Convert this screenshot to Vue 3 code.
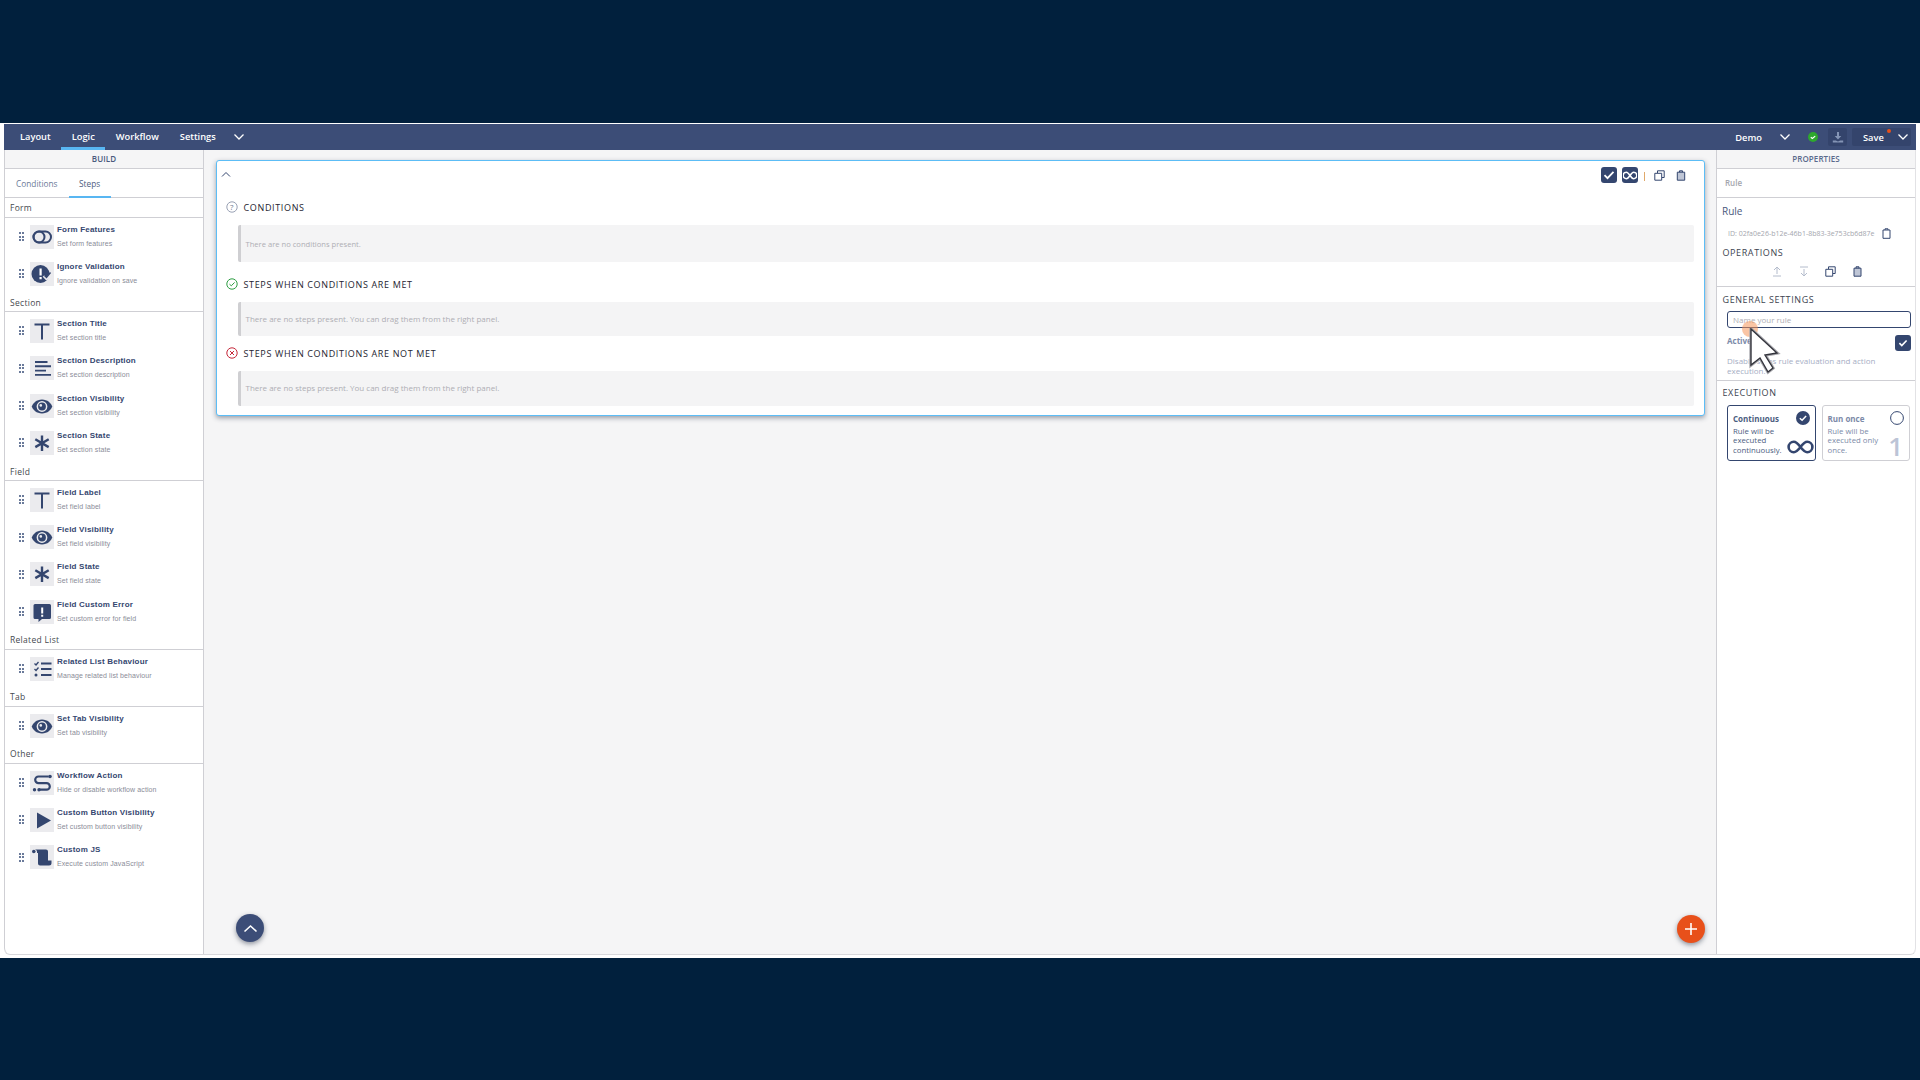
<script setup>
const NAVY = '#34466f'
const W = '#ebebee'
const f = (d, fill = NAVY) => ({ d, fill, stroke: 'none', sw: 0 })
const s = (d, sw = 2.2, stroke = NAVY) => ({ d, fill: 'none', stroke, sw })
const circle = (cx, cy, r) => `M${cx - r} ${cy}a${r} ${r} 0 1 0 ${2 * r} 0a${r} ${r} 0 1 0 ${-2 * r} 0z`
const eye = [
  f('M12 5.5C6.5 5.5 2.8 9.3 1.8 12.5c1 3.2 4.7 7 10.2 7s9.2-3.8 10.2-7C21.2 9.3 17.5 5.5 12 5.5z'),
  f(circle(12, 12.5, 5.4), W),
  f(circle(12, 12.5, 3.9)),
  f(circle(10.8, 11.4, 1.3), W)
]
const star = [s('M12 4.5v15.5M5.3 8.3l13.4 7.8M18.7 8.3L5.3 16.1', 2.4)]
const tee = [s('M4.5 5.5h15M12 5.5v15', 2)]
const icons = {
  toggle: [s('M9 6.5h6.5a5.5 5.5 0 0 1 0 11H9a5.5 5.5 0 0 1 0-11z', 2), s(circle(9, 12, 5.5), 2)],
  ignore: [f(circle(10.5, 12, 9)), f('M9.5 6.5h2.2v7H9.5zM9.5 15h2.2v2.2H9.5z', '#fff'), s('M13.5 14l3 3 5-6', 2.4, W), s('M14.5 13.5l2 2 4-5', 1.4, NAVY)],
  title: tee,
  align: [s('M5 6h12.5M5 10.3h16M5 14.6h11M5 18.9h16', 1.9)],
  eye,
  star,
  error: [f('M5 4h14.5A1.5 1.5 0 0 1 21 5.5v12a1.5 1.5 0 0 1-1.5 1.5H12l-3.5 3v-3H5a1.5 1.5 0 0 1-1.5-1.5v-12A1.5 1.5 0 0 1 5 4z'), f('M11.2 7.5h2v6h-2zM11.2 14.8h2v2h-2z', '#fff')],
  list: [s('M4.5 6.5l1.5 1.5 2.5-3M4.5 12l1.5 1.5 2.5-3', 1.3), f(circle(6, 18, 1.5)), s('M11 6.5h10.5M11 12h10.5M11 18h10.5', 2)],
  flow: [s('M18.5 5.5H8.5a3.3 3.3 0 0 0 0 6.6h8a3.3 3.3 0 0 1 0 6.6H9', 2.2), f(circle(20, 5.5, 1.8)), f(circle(4.5, 18.7, 1.7)), f(circle(9, 18.7, 1.7))],
  play: [f('M7 4.5l14 8-14 8z')],
  script: [f('M3.5 4.5h12.5a2 2 0 0 1 2 2v9h3.5v2.5a2.5 2.5 0 0 1-2.5 2.5H10a2 2 0 0 1-2-2v-10.5h-1V7a2.5 2.5 0 0 0-2.5-2.5h-1z'), f(circle(3.8, 6.5, 1.8))]
}
const groups = [
  { name: 'Form', items: [
    ['toggle', 'Form Features', 'Set form features'],
    ['ignore', 'Ignore Validation', 'Ignore validation on save']] },
  { name: 'Section', items: [
    ['title', 'Section Title', 'Set section title'],
    ['align', 'Section Description', 'Set section description'],
    ['eye', 'Section Visibility', 'Set section visibility'],
    ['star', 'Section State', 'Set section state']] },
  { name: 'Field', items: [
    ['title', 'Field Label', 'Set field label'],
    ['eye', 'Field Visibility', 'Set field visibility'],
    ['star', 'Field State', 'Set field state'],
    ['error', 'Field Custom Error', 'Set custom error for field']] },
  { name: 'Related List', items: [['list', 'Related List Behaviour', 'Manage related list behaviour']] },
  { name: 'Tab', items: [['eye', 'Set Tab Visibility', 'Set tab visibility']] },
  { name: 'Other', items: [
    ['flow', 'Workflow Action', 'Hide or disable workflow action'],
    ['play', 'Custom Button Visibility', 'Set custom button visibility'],
    ['script', 'Custom JS', 'Execute custom JavaScript']] }
]
const blocks = [
  { title: 'Conditions', kind: 'q', text: 'There are no conditions present.', cls: 'b1' },
  { title: 'Steps when conditions are met', kind: 'ok', text: 'There are no steps present. You can drag them from the right panel.', cls: 'b2' },
  { title: 'Steps when conditions are not met', kind: 'no', text: 'There are no steps present. You can drag them from the right panel.', cls: 'b3' }
]
</script>

<template>
  <div class="page">
    <div class="app">
      <header class="nav">
        <a class="nt">Layout</a>
        <a class="nt current">Logic</a>
        <a class="nt">Workflow</a>
        <a class="nt">Settings</a>
        <svg class="chev" width="12" height="8" viewBox="0 0 12 8"><path d="M1.5 1.5L6 6l4.500-4.500" fill="none" stroke="#fff" stroke-width="1.3"/></svg>
        <span class="grow"></span>
        <span class="demo">Demo</span>
        <svg class="chev demo-chev" width="12" height="8" viewBox="0 0 12 8"><path d="M1.5 1.5L6 6l4.500-4.500" fill="none" stroke="#fff" stroke-width="1.3"/></svg>
        <svg class="ok" width="10" height="10" viewBox="0 0 10 10"><circle cx="5" cy="5" r="5" fill="#2ea82e"/><path d="M2.800 5.200l1.600 1.300 2.800-2.400" fill="none" stroke="#fff" stroke-width="1.2"/></svg>
        <span class="dl">
          <svg width="12" height="12" viewBox="0 0 12 12"><path d="M5 1h2v4h2.300L6 8.500 2.700 5H5zM.8 9.500h3l2.200 1 2.200-1h3V11.500H.8z" fill="#8494b5"/></svg>
        </span>
        <span class="save">
          <span>Save</span>
          <i class="dot"></i>
          <svg width="12" height="8" viewBox="0 0 12 8"><path d="M1.5 1.5L6 6l4.500-4.500" fill="none" stroke="#fff" stroke-width="1.3"/></svg>
        </span>
      </header>
      <div class="body">
        <aside class="left">
          <div class="phead">BUILD</div>
          <div class="tabs">
            <span class="tab">Conditions</span>
            <span class="tab on">Steps</span>
          </div>
          <section v-for="g in groups" :key="g.name">
            <div class="glabel">{{ g.name }}</div>
            <div class="gitems">
              <div v-for="it in g.items" :key="it[1]" class="item">
                <span class="grip"><i v-for="n in 6" :key="n"></i></span>
                <span class="ibox">
                  <svg width="24" height="24" viewBox="0 0 24 24">
                    <path v-for="(p, i) in icons[it[0]]" :key="i" :d="p.d" :fill="p.fill" :stroke="p.stroke" :stroke-width="p.sw"/>
                  </svg>
                </span>
                <span class="itxt">
                  <b>{{ it[1] }}</b>
                  <small>{{ it[2] }}</small>
                </span>
              </div>
            </div>
          </section>
        </aside>
        <main class="center">
          <div class="card">
            <div class="ctop">
              <svg class="up-chev" width="10" height="7" viewBox="0 0 10 7"><path d="M1 5.500l4-4 4 4" fill="none" stroke="#34466f" stroke-width="1"/></svg>
              <span class="grow"></span>
              <span class="sq"><svg width="12" height="10" viewBox="0 0 12 10"><path d="M1.5 5.200l3 3L10.500 1.800" fill="none" stroke="#fff" stroke-width="1.8"/></svg></span>
              <span class="sq"><svg width="14" height="9" viewBox="0 0 14 9"><path d="M7 4.500C5.500 2.300 4.500 1.300 3.400 1.300a3.200 3.200 0 0 0 0 6.400C4.500 7.700 5.500 6.700 7 4.500s2.500-3.200 3.600-3.200a3.200 3.200 0 0 1 0 6.400C9.500 7.700 8.500 6.700 7 4.500z" fill="none" stroke="#fff" stroke-width="1.5"/></svg></span>
              <span class="vsep"></span>
              <svg class="tool" width="11" height="11" viewBox="0 0 11 11"><path d="M3.500 3V.8h6.700v6.700H8M.8 3.300h6.900v6.900H.8z" fill="none" stroke="#34466f" stroke-width="1"/></svg>
              <svg class="tool tr" width="10" height="11" viewBox="0 0 10 11"><path d="M1.300 2.200h7.400v8H1.300zM3.500 2.200V.8h3v1.400" fill="#bfc6d6" stroke="#34466f" stroke-width="1"/></svg>
            </div>
            <template v-for="b in blocks" :key="b.title">
              <div class="bh" :class="b.cls">
                <svg width="12" height="12" viewBox="0 0 12 12">
                  <template v-if="b.kind === 'q'">
                    <circle cx="6" cy="6" r="5.2" fill="none" stroke="#8d96ab" stroke-width=".9"/>
                    <text x="6" y="8.5" text-anchor="middle" class="qm">?</text>
                  </template>
                  <template v-else-if="b.kind === 'ok'">
                    <circle cx="6" cy="6" r="5.2" fill="none" stroke="#2f9e44" stroke-width="1"/>
                    <path d="M3.500 6.200l1.800 1.600L8.600 4.400" fill="none" stroke="#2f9e44" stroke-width="1"/>
                  </template>
                  <template v-else>
                    <circle cx="6" cy="6" r="5.2" fill="none" stroke="#c6283a" stroke-width="1"/>
                    <path d="M4 4l4 4M8 4l-4 4" stroke="#c6283a" stroke-width="1"/>
                  </template>
                </svg>
                <span>{{ b.title }}</span>
              </div>
              <div class="empty" :class="b.cls">{{ b.text }}</div>
            </template>
          </div>
          <button class="fab up"><svg width="15" height="9" viewBox="0 0 15 9"><path d="M1.500 7.500L7.500 2l6 5.500" fill="none" stroke="#fff" stroke-width="1.6"/></svg></button>
          <button class="fab add"><svg width="14" height="14" viewBox="0 0 14 14"><path d="M7 1v12M1 7h12" stroke="#fff" stroke-width="1.6"/></svg></button>
        </main>
        <aside class="right">
          <div class="phead props">PROPERTIES</div>
          <div class="rbar">Rule</div>
          <div class="rsec first">
            <div class="rtitle">Rule</div>
            <div class="idrow">
              <span>ID: 02fa0e26-b12e-46b1-8b83-3e753cb6d87e</span>
              <svg width="9" height="11" viewBox="0 0 9 11"><path d="M1 2h7v8.300H1zM3 2V.8h3V2" fill="none" stroke="#34466f" stroke-width="1"/></svg>
            </div>
            <div class="cap">OPERATIONS</div>
            <div class="ops">
              <svg width="10" height="11" viewBox="0 0 10 11"><path d="M5 8V1.500M2 4l3-3 3 3M1 10h8" fill="none" stroke="#b4bccc" stroke-width="1"/></svg>
              <svg width="10" height="11" viewBox="0 0 10 11"><path d="M5 3v6.500M2 7l3 3 3-3M1 1h8" fill="none" stroke="#b4bccc" stroke-width="1"/></svg>
              <svg width="11" height="11" viewBox="0 0 11 11"><path d="M3.500 3V.8h6.700v6.700H8M.8 3.300h6.900v6.900H.8z" fill="none" stroke="#34466f" stroke-width="1"/></svg>
              <svg width="9" height="11" viewBox="0 0 9 11"><path d="M1 2.200h7v8H1zM3 2.200V.8h3v1.400" fill="#bfc6d6" stroke="#34466f" stroke-width="1"/></svg>
            </div>
          </div>
          <div class="rsec second">
            <div class="cap">GENERAL SETTINGS</div>
            <input class="name" placeholder="Name your rule" />
            <div class="activerow">
              <span>Active</span>
              <span class="sq big"><svg width="10" height="8" viewBox="0 0 12 10"><path d="M1.500 5.200l3 3L10.500 1.800" fill="none" stroke="#fff" stroke-width="2"/></svg></span>
            </div>
            <p class="help">Disable steps rule evaluation and action execution.</p>
          </div>
          <div class="rsec third">
            <div class="cap">EXECUTION</div>
            <div class="modes">
              <div class="mode sel">
                <b>Continuous</b>
                <p>Rule will be<br>executed<br>continuously.</p>
                <svg class="mtick" width="14" height="14" viewBox="0 0 14 14"><circle cx="7" cy="7" r="7" fill="#34466f"/><path d="M3.800 7.200l2.300 2.100 4-4.400" fill="none" stroke="#fff" stroke-width="1.5"/></svg>
                <svg class="msym" width="27" height="14" viewBox="0 0 27 14"><path d="M13.500 7C10.500 3 8.800 1.800 6.800 1.800a5.200 5.200 0 0 0 0 10.400c2 0 3.700-1.200 6.700-5.200s4.700-5.200 6.700-5.200a5.200 5.200 0 0 1 0 10.400c-2 0-3.700-1.200-6.700-5.200z" fill="none" stroke="#34466f" stroke-width="2.6"/></svg>
              </div>
              <div class="mode">
                <b>Run once</b>
                <p>Rule will be<br>executed only<br>once.</p>
                <svg class="mtick" width="14" height="14" viewBox="0 0 14 14"><circle cx="7" cy="7" r="6.400" fill="#fff" stroke="#34466f" stroke-width="1"/></svg>
                <span class="one">1</span>
              </div>
            </div>
          </div>
        </aside>
      </div>
    </div>
    <div class="cursor">
      <i></i>
      <svg width="32" height="48" viewBox="0 0 32 48"><path d="M2 1v36l9-7 8 14 5-4-8-13 12-2z" fill="#fff" stroke="#a9a9ae" stroke-width="3.400"/><path d="M2 1v36l9-7 8 14 5-4-8-13 12-2z" fill="#fff" stroke="#33343c" stroke-width="1.4"/></svg>
    </div>
  </div>
</template>

<style>
html, body { margin: 0; background: #01203d; }
</style>

<style scoped>
* { box-sizing: border-box; }
.page { width: 1920px; height: 1080px; padding-top: 123px; background: #01203d; position: relative; overflow: hidden; font-family: "Open Sans", sans-serif; color: #34466f; }
.app { height: 835px; background: #fff; padding: 1px 4px 3px; display: flex; flex-direction: column; }
.nav { height: 26px; flex: none; background: #3c4d77; display: flex; align-items: center; color: #fff; padding-left: 5.5px; }
.nt { height: 26px; padding: 0 10.5px; font-size: 9.3px; font-weight: 600; line-height: 25px; border-bottom: 3px solid transparent; }
.nt.current { border-bottom-color: #58b6f2; }
.chev { margin-left: 7px; }
.grow { flex: 1; }
.demo { font-size: 9.3px; font-weight: 600; }
.demo-chev { margin-left: 17px; }
.ok { margin-left: 17px; }
.dl { width: 19px; height: 18px; margin-left: 10px; background: #34446c; border-radius: 2px; display: flex; align-items: center; justify-content: center; }
.save { width: 59px; height: 18px; margin: 0 5px 0 5px; background: #34446c; border-radius: 2px; position: relative; display: flex; align-items: center; justify-content: space-between; padding: 0 2px 0 11px; font-size: 9.3px; font-weight: 600; }
.dot { position: absolute; left: 35px; top: 1px; width: 4px; height: 4px; border-radius: 50%; background: #e8501a; }
.body { flex: 1; display: flex; min-height: 0; border-bottom: 1px solid #d8d8dc; border-radius: 0 0 6px 6px; }
.left { width: 200px; flex: none; border-left: 1px solid #cfcfd4; border-right: 1px solid #cfcfd4; border-radius: 0 0 0 6px; background: #fff; }
.phead { height: 19px; background: #f5f5f6; border-bottom: 1px solid #cfcfd4; text-align: center; font-size: 8px; font-weight: 600; line-height: 18px; letter-spacing: .1px; color: #4a5a7d; }
.tabs { height: 29px; display: flex; padding-left: 1px; border-bottom: 1px solid #cfcfd4; }
.tab { height: 29px; padding: 0 10px; line-height: 30px; font-size: 8.3px; color: #6b7a98; border-bottom: 2px solid transparent; margin-right: 1px; }
.tab.on { border-bottom-color: #58b6f2; padding: 0 10.5px; color: #4c5d80; }
.glabel { height: 19.6px; border-bottom: 1px solid #cfcfd4; padding-left: 5px; font-size: 8.5px; line-height: 19.5px; color: #45494f; letter-spacing: .3px; }
section:first-of-type .glabel { height: 20px; }
.item { height: 37.33px; display: flex; align-items: center; padding-left: 14px; }
.grip { width: 5px; display: grid; grid-template-columns: 2px 2px; gap: 1.5px 1px; margin-right: 6px; }
.grip i { width: 2px; height: 2px; background: #6a7a9a; }
.ibox { width: 24px; height: 24px; background: #ebebee; flex: none; }
.ibox svg { display: block; }
.itxt { margin-left: 3px; height: 24px; display: flex; flex-direction: column; font-family: "Liberation Sans", sans-serif; position: relative; top: -1px; }
.itxt b { font-size: 8px; line-height: 12px; color: #34466f; letter-spacing: .2px; }
.itxt small { font-size: 7px; line-height: 15px; color: #8a8c98; letter-spacing: .1px; }
.center { flex: 1; background: #f5f5f6; padding: 10px 11px 0 11.5px; position: relative; }
.card { height: 256px; background: #fff; border: 1px solid #5cbdf6; border-radius: 3px; box-shadow: 0 2px 5px rgba(40,50,70,.45); padding: 0 8px 0 5px; }
.ctop { height: 28px; display: flex; align-items: center; }
.up-chev { margin: -2px 0 0 -1px; }
.sq { width: 16px; height: 16px; border-radius: 3px; background: #34466f; margin-left: 5px; display: flex; align-items: center; justify-content: center; }
.vsep { width: 1px; height: 9px; background: #e0a96a; margin: 3px 0 0 6px; }
.tool { margin-left: 9px; }
.tr { margin-left: 11px; margin-right: 10px; }
.bh { display: flex; align-items: center; gap: 6px; height: 14px; margin-left: 4px; font-size: 9px; letter-spacing: .65px; color: #1e2430; text-transform: uppercase; }
.bh.b1 { margin-top: 11px; }
.bh.b2 { margin-top: 15px; }
.bh.b3 { margin-top: 10px; }
.bh svg { flex: none; }
.qm { font: 8px "Open Sans", sans-serif; fill: #6f7a92; }
.empty { margin: 11px 2px 0 16px; height: 36px; background: #f4f4f5; border-left: 3px solid #cfcfd2; border-radius: 2px; font-size: 8px; line-height: 37px; padding-left: 5px; color: #aeaeb4; }
.empty.b1 { height: 37px; line-height: 38px; font-size: 7.6px; }
.empty.b2 { height: 34px; line-height: 34px; }
.empty.b3 { height: 35px; line-height: 34px; }
.fab { position: absolute; width: 28px; height: 28px; border-radius: 50%; border: 0; padding: 0; display: flex; align-items: center; justify-content: center; box-shadow: 0 2px 5px rgba(40,50,70,.5); }
.up { left: 32px; top: 764px; background: #3c4d77; }
.add { left: 1473px; top: 765px; background: #e8501a; }
.right { width: 200px; flex: none; border-left: 1px solid #cfcfd4; background: #fff; border-radius: 0 0 6px 0; border-right: 1px solid #e2e2e5; }
.props { color: #5a6a8c; }
.rbar { height: 29px; border-bottom: 1px solid #cfcfd4; padding-left: 8px; font-size: 8px; line-height: 28px; color: #a4a6ae; font-weight: 600; }
.rsec { padding: 0 5px; border-bottom: 1px solid #cfcfd4; }
.first { height: 89px; }
.rtitle { font-size: 10px; line-height: 14px; padding-top: 6px; height: 20px; color: #4a5a7d; font-weight: 400; }
.idrow { display: flex; align-items: center; padding-left: 6px; margin-top: 9px; height: 12px; font-size: 7px; color: #a4a6ae; }
.idrow svg { margin-left: 8px; }
.cap { font-size: 9px; letter-spacing: .6px; color: #3d4450; line-height: 12px; padding-left: .5px; }
.first .cap { margin-top: 8px; }
.ops { display: flex; align-items: center; margin-top: 6px; padding-left: 50px; gap: 16.5px; height: 12px; }
.second { height: 94px; padding-top: 7px; }
.name { display: block; width: 184px; height: 17px; margin: 5px 0 0 5px; border: 1px solid #34466f; border-radius: 3px; font: 8px "Open Sans", sans-serif; padding: 0 5px; outline: none; }
.name::placeholder { color: #aeaeb4; opacity: 1; }
.activerow { display: flex; justify-content: space-between; align-items: flex-start; margin: 7px 0 0 5px; width: 184px; height: 16px; font-size: 8px; line-height: 11px; font-weight: 700; color: #7c8aa8; }
.big { margin: 0; }
.help { margin: 5px 0 0 5px; width: 184px; font-size: 8px; line-height: 10px; color: #a6aec4; }
.third { padding-top: 6px; border-bottom: 0; }
.modes { display: flex; gap: 6px; margin: 6px 0 0 5px; }
.mode { width: 89px; height: 56px; border: 1px solid #cfcfd4; border-radius: 3px; padding: 7px 0 0 5px; position: relative; color: #7c8aa8; }
.mode.sel { border-color: #34466f; color: #4c5d80; }
.mode b { display: block; font-size: 8px; line-height: 11px; }
.mode p { margin: 2.5px 0 0; font-size: 7.8px; line-height: 9.5px; }
.mtick { position: absolute; right: 5px; top: 5px; }
.msym { position: absolute; right: 1px; top: 34px; }
.one { position: absolute; right: 6px; top: 27px; font: 600 26px/26px "Open Sans", sans-serif; color: #bcc4d6; }
.cursor { position: absolute; left: 1749px; top: 328px; pointer-events: none; }
.cursor i { position: absolute; left: -7px; top: -7px; width: 16px; height: 16px; border-radius: 50%; background: rgba(246,150,90,.55); }
.cursor svg { position: relative; display: block; }
</style>
